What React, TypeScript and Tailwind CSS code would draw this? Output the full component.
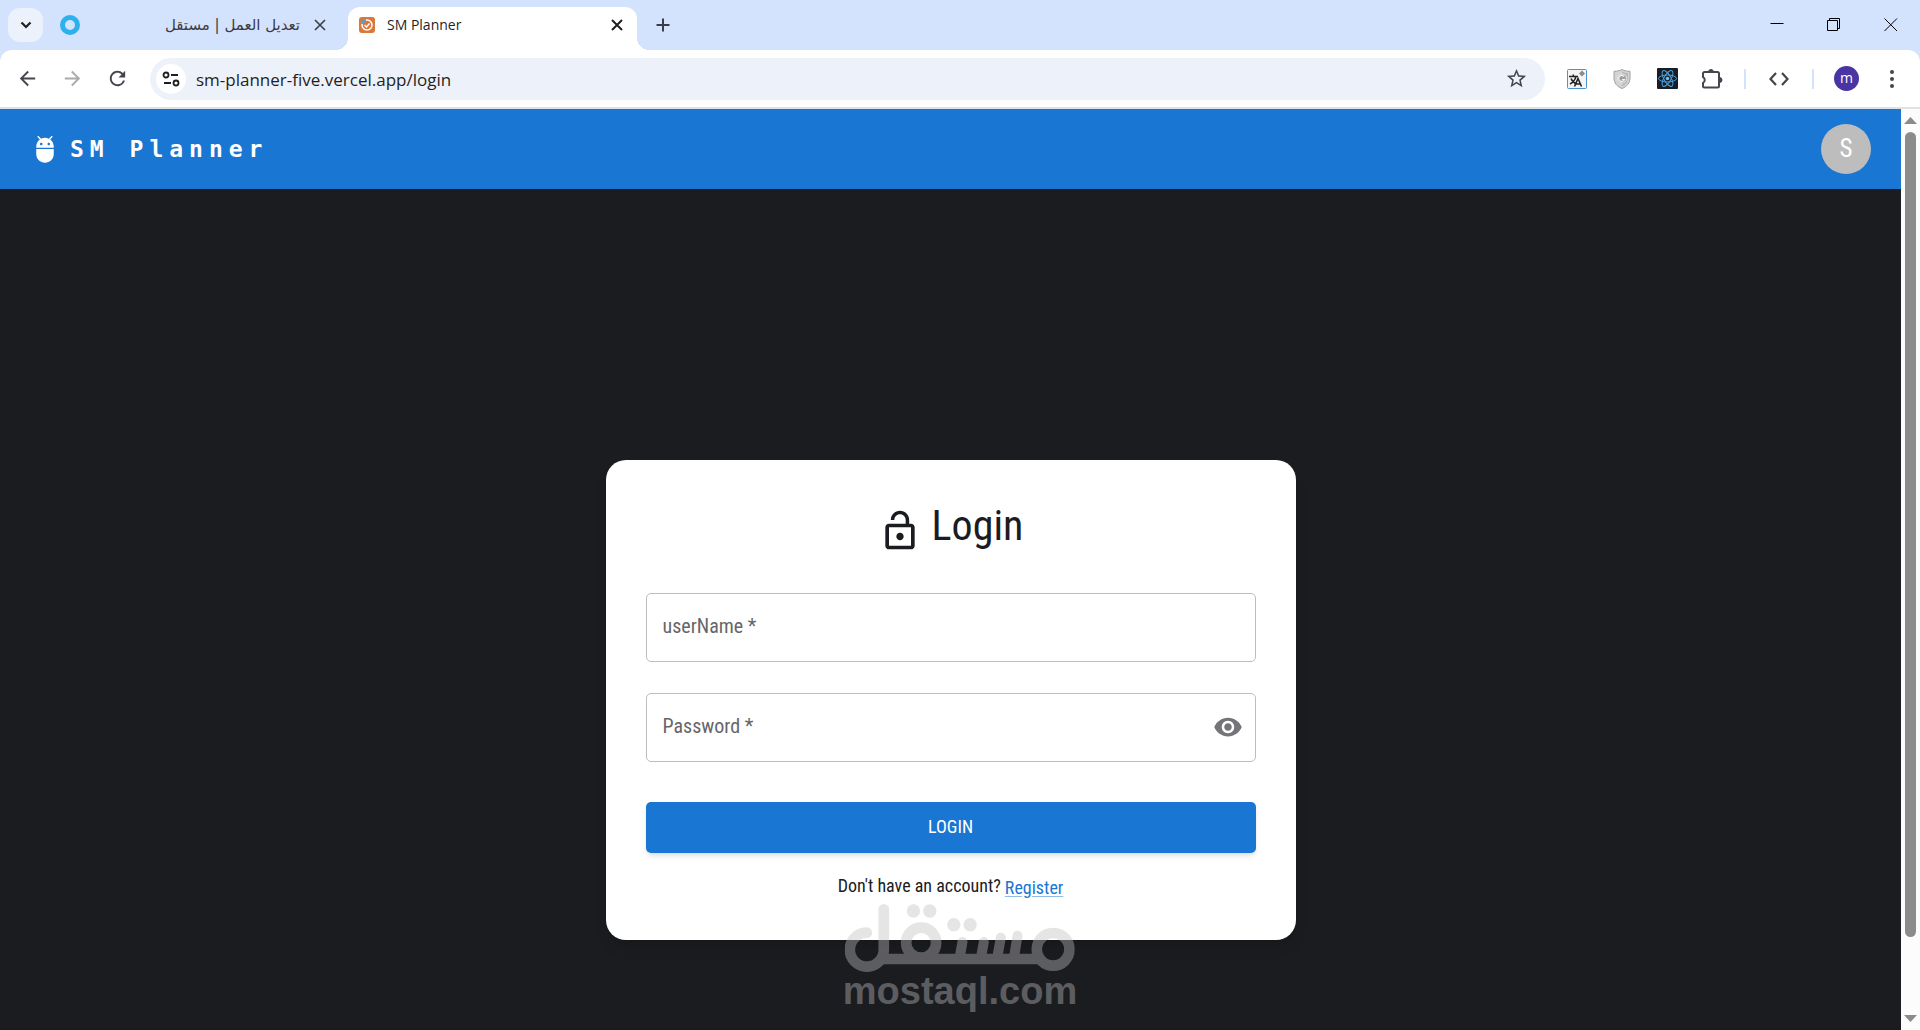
import { useState } from "react";
import type { FormEvent } from "react";
import {
  MdAdb,
  MdArrowBack,
  MdArrowForward,
  MdLockOpen,
  MdRefresh,
  MdStarBorder,
  MdVisibility,
  MdVisibilityOff,
} from "react-icons/md";

const iconButton = "flex h-[30px] w-[30px] shrink-0 items-center justify-center";

const CloseIcon = ({ bold = false }: { bold?: boolean }) => (
  <svg width="12" height="12" viewBox="0 0 12 12" stroke="currentColor" strokeWidth={bold ? 2 : 1.6}>
    <path d="M1 1l10 10M11 1L1 11" />
  </svg>
);

const TranslateIcon = () => (
  <svg width="20" height="20" viewBox="0 0 20 20" fill="none">
    <rect x="0.5" y="0.5" width="19" height="19" rx="1" fill="#f4f4f4" stroke="#4d94cf" />
    <path d="M2 7.5h9M6.3 5.5v2M3 15c3-1.500 5-4 6-7.500M4 9.500c1 2.500 3 4.500 5.500 5.500" stroke="#222" strokeWidth="1.500" />
    <path d="M7.500 17.500l3.500-8 3.500 8M9 15h4.500" stroke="#222" strokeWidth="1.600" />
    <path d="M15 1.500l3 3-3 3-3-3z" fill="#8a8a8a" />
  </svg>
);

const ShieldIcon = () => (
  <svg width="18" height="20" viewBox="0 0 18 20" fill="none">
    <path d="M9 .5c2 1.200 5 1.800 8 1.800V9c0 5-3 8.500-8 10.500C4 17.500 1 14 1 9V2.300c3 0 6-.6 8-1.800z" fill="#d3d3d3" stroke="#a0a0a0" />
    <path d="M9 2.500c2 1 4 1.500 6 1.500v5c0 4-2 6.500-6 8.200z" fill="#b9b9b9" />
    <circle cx="9" cy="9.500" r="4.500" fill="#a0a0a0" stroke="#ededed" />
    <path d="M11 7.500a3 3 0 1 0 .5 3H9" stroke="#f3f3f3" strokeWidth="1.200" />
  </svg>
);

const ReactIcon = () => (
  <svg width="21" height="21" viewBox="0 0 21 21" fill="none" stroke="#4aa3df">
    <rect width="21" height="21" rx="1" fill="#1c1c24" stroke="none" />
    <ellipse cx="10.500" cy="10.500" rx="9" ry="3.500" />
    <ellipse cx="10.500" cy="10.500" rx="9" ry="3.500" transform="rotate(60 10.500 10.500)" />
    <ellipse cx="10.500" cy="10.500" rx="9" ry="3.500" transform="rotate(120 10.500 10.500)" />
    <circle cx="10.500" cy="10.500" r="1.800" fill="#61c3f5" stroke="none" />
  </svg>
);

const PuzzleIcon = () => (
  <svg width="21" height="20" viewBox="0 0 21 20" fill="none">
    <path
      d="M2.500 3h13a1.500 1.500 0 0 1 1.500 1.500v12.500a1.500 1.500 0 0 1-1.500 1.500h-13A1.500 1.500 0 0 1 1 17v-3.200a3.100 3.100 0 0 0 0-5.600V4.500A1.500 1.500 0 0 1 2.500 3z"
      stroke="currentColor"
      strokeWidth="2"
      strokeLinejoin="round"
    />
    <path d="M6.500 3a2.500 2.500 0 0 1 5 0zM17.500 8.500a2.500 2.500 0 0 1 0 5z" fill="currentColor" stroke="currentColor" />
  </svg>
);

function TabStrip() {
  return (
    <div className="flex h-[50px] items-end bg-[#d3e3fd] pl-2 text-[#3c3c46]">
      <button aria-label="Search tabs" className="mb-2 flex h-[34px] w-[35px] items-center justify-center rounded-xl bg-[#ecf2fb] text-[#1f1f1f]">
        <svg width="12" height="8" viewBox="0 0 12 8" fill="none" stroke="currentColor" strokeWidth="2.200">
          <path d="M1.500 1.500L6 6l4.500-4.500" />
        </svg>
      </button>

      {/* Inactive tab */}
      <div className="ml-[17px] flex h-[43px] w-[288px] items-center pb-[7px] pr-[22px]">
        <svg width="20" height="20" viewBox="0 0 20 20" fill="none">
          <circle cx="10" cy="10" r="7.500" stroke="#2cb1ee" strokeWidth="5" />
        </svg>
        <span dir="rtl" className="flex-1 whitespace-nowrap font-['Segoe_UI','DejaVu_Sans',sans-serif] text-[15px] leading-5">
          تعديل العمل | مستقل
        </span>
        <button aria-label="Close tab" className="ml-[14px]">
          <CloseIcon />
        </button>
      </div>

      {/* Active tab */}
      <div className="relative flex h-[43px] w-[289px] items-center rounded-t-xl bg-white pb-[7px] pl-[11px] pr-[14px] text-[#1f1f1f]">
        <span className="absolute -left-3 bottom-0 h-3 w-3 bg-[radial-gradient(circle_at_0_0,transparent_12px,white_12px)]" />
        <span className="absolute -right-3 bottom-0 h-3 w-3 bg-[radial-gradient(circle_at_100%_0,transparent_12px,white_12px)]" />
        <svg width="16" height="16" viewBox="0 0 16 16" fill="none">
          <rect width="16" height="16" rx="3" fill="#d9783a" />
          <circle cx="8" cy="8" r="5" stroke="#fff" strokeWidth="1.500" />
          <path d="M3.200 7A5 5 0 0 1 7 3.200" stroke="#3fa7e6" strokeWidth="2.500" />
          <path d="M5.500 8l2 2 3-3.500" stroke="#fff" strokeWidth="1.500" />
        </svg>
        <span className="ml-3 flex-1 text-sm leading-5">SM Planner</span>
        <button aria-label="Close tab">
          <CloseIcon bold />
        </button>
      </div>

      <button aria-label="New tab" className="mb-[18px] ml-[19px]">
        <svg width="14" height="14" viewBox="0 0 14 14" stroke="currentColor" strokeWidth="2">
          <path d="M7 .5v13M.5 7h13" />
        </svg>
      </button>

      {/* Window controls */}
      <div className="mb-[18px] ml-auto flex gap-[43px] pr-[22px] text-black">
        <button aria-label="Minimize">
          <svg width="14" height="14" viewBox="0 0 14 14" stroke="currentColor">
            <path d="M.5 5.500h13" />
          </svg>
        </button>
        <button aria-label="Restore">
          <svg width="14" height="14" viewBox="0 0 14 14" fill="none" stroke="currentColor">
            <path d="M.5 2.500h10v10H.5zM2.500 2.500v-2h10v10h-2" />
          </svg>
        </button>
        <button aria-label="Close">
          <svg width="14" height="14" viewBox="0 0 14 14" stroke="currentColor">
            <path d="M.5.5l12.500 12.500M13 .5L.5 13" />
          </svg>
        </button>
      </div>
    </div>
  );
}

function Toolbar() {
  return (
    <div className="bg-[#d3e3fd]">
      <div className="flex h-[59px] items-center rounded-t-xl border-b-2 border-[#dfe1e5] bg-white pl-3 pr-[13px] text-[#45454f]">
        <div className="flex gap-[15px]">
          <button aria-label="Back" className={iconButton}><MdArrowBack size={23} /></button>
          <button aria-label="Forward" className={`${iconButton} text-[#ababaf]`}><MdArrowForward size={23} /></button>
          <button aria-label="Reload" className={iconButton}><MdRefresh size={23} /></button>
        </div>

        <div className="ml-[18px] flex h-[42px] flex-1 items-center rounded-full bg-[#edf1fa] px-[6px]">
          <button aria-label="Site information" className={`${iconButton} rounded-full bg-white text-[#1f1f1f]`}>
            <svg width="18" height="16" viewBox="0 0 18 16" fill="none" stroke="currentColor" strokeWidth="1.800">
              <circle cx="4" cy="4" r="2.500" />
              <circle cx="14" cy="12" r="2.500" />
              <path d="M9 4h7M2 12h7" />
            </svg>
          </button>
          <input
            type="text"
            aria-label="Address"
            defaultValue="sm-planner-five.vercel.app/login"
            className="ml-[10px] min-w-0 flex-1 bg-transparent pt-[2px] text-[17px] leading-6 text-[#1f1f1f] outline-none"
          />
          <button aria-label="Bookmark" className={`${iconButton} mr-2`}><MdStarBorder size={23} /></button>
        </div>

        <div className="ml-[17px] flex items-center gap-[15px]">
          <button aria-label="Translate" className={iconButton}><TranslateIcon /></button>
          <button aria-label="Protection" className={iconButton}><ShieldIcon /></button>
          <button aria-label="React tools" className={iconButton}><ReactIcon /></button>
          <button aria-label="Extensions" className={iconButton}><PuzzleIcon /></button>
        </div>
        <div className="ml-[17px] h-5 w-[2px] bg-[#d3e3fd]" />
        <button aria-label="Developer tools" className={`${iconButton} ml-[18px]`}>
          <svg width="20" height="14" viewBox="0 0 20 14" fill="none" stroke="currentColor" strokeWidth="2.200">
            <path d="M7 1L1.500 7 7 13M13 1l5.500 6-5.500 6" />
          </svg>
        </button>
        <div className="ml-[18px] h-5 w-[2px] bg-[#d3e3fd]" />
        <button aria-label="Profile" className="ml-5 flex h-[25px] w-[25px] items-center justify-center rounded-full bg-[#4a34a3] pb-[2px] text-sm text-white">
          m
        </button>
        <button aria-label="Menu" className={`${iconButton} ml-[18px]`}>
          <svg width="4" height="18" viewBox="0 0 4 18" fill="currentColor">
            <circle cx="2" cy="2" r="2" />
            <circle cx="2" cy="9" r="2" />
            <circle cx="2" cy="16" r="2" />
          </svg>
        </button>
      </div>
    </div>
  );
}

function ScrollBar() {
  return (
    <div className="flex w-[19px] shrink-0 flex-col items-center bg-[#fcfcfc] py-2 text-[#8b8b8b]">
      <svg width="13" height="7" viewBox="0 0 13 7" fill="currentColor"><path d="M6.500 0L13 7H0z" /></svg>
      <div className="my-2 w-[11px] flex-1">
        <div className="h-[92%] rounded-full bg-[#8b8b8b]" />
      </div>
      <svg width="13" height="7" viewBox="0 0 13 7" fill="currentColor"><path d="M0 0h13L6.500 7z" /></svg>
    </div>
  );
}

function Watermark() {
  return (
    <div className="pointer-events-none absolute bottom-5 left-1/2 flex -translate-x-1/2 flex-col items-center text-[#bfbfc3] opacity-40">
      <svg width="230" height="68" viewBox="75 70 690 204" fill="none" stroke="currentColor" strokeWidth="32" strokeLinecap="round">
        <path d="M141 156a51 51 0 1 0 51 50V86" />
        <circle cx="304" cy="186" r="45" />
        <circle cx="700" cy="206" r="49" />
        <path d="M175 235h490" strokeLinecap="butt" />
        <path d="M428 184l-8 44M492 184l-8 44M543 171l-10 57M593 165l-10 63" strokeWidth="30" />
        <g fill="currentColor" stroke="none">
          <circle cx="281" cy="91" r="20" />
          <circle cx="330" cy="91" r="20" />
          <circle cx="402" cy="132" r="20" />
          <circle cx="451" cy="132" r="20" />
        </g>
      </svg>
      <span className="font-['Liberation_Sans',sans-serif] text-[38px] font-bold leading-[38px]">mostaql.com</span>
    </div>
  );
}

function LoginForm() {
  const [userName, setUserName] = useState("");
  const [password, setPassword] = useState("");
  const [showPassword, setShowPassword] = useState(false);

  const handleSubmit = (e: FormEvent) => {
    e.preventDefault();
  };

  return (
    <form
      onSubmit={handleSubmit}
      className="mt-[100px] flex w-[690px] flex-col rounded-[20px] bg-white px-10 pb-10 pt-[38px] text-[#1b1c1f] shadow-lg"
    >
      <h1 className="flex items-end justify-center gap-[10px] text-[42px] leading-[55px]">
        <MdLockOpen size={44} />
        Login
      </h1>

      <div className="relative mt-10">
        <input
          id="userName"
          type="text"
          placeholder=" "
          value={userName}
          onChange={(e) => setUserName(e.target.value)}
          className="peer block h-[69px] w-full rounded-[5px] border border-[#bdbdbd] px-[17px] text-xl outline-none focus:border-[#1976d2]"
        />
        <label htmlFor="userName" className="pointer-events-none invisible absolute left-[17px] top-[19px] text-xl leading-7 text-[#666669] peer-placeholder-shown:visible">
          userName *
        </label>
      </div>

      <div className="relative mt-[31px]">
        <input
          id="password"
          type={showPassword ? "text" : "password"}
          placeholder=" "
          value={password}
          onChange={(e) => setPassword(e.target.value)}
          className="peer block h-[69px] w-full rounded-[5px] border border-[#bdbdbd] pl-[17px] pr-14 text-xl outline-none focus:border-[#1976d2]"
        />
        <label htmlFor="password" className="pointer-events-none invisible absolute left-[17px] top-[19px] text-xl leading-7 text-[#666669] peer-placeholder-shown:visible">
          Password *
        </label>
        <button
          type="button"
          aria-label="Toggle password visibility"
          onClick={() => setShowPassword(!showPassword)}
          className="absolute right-[13px] top-[19px] text-[#757579]"
        >
          {showPassword ? <MdVisibilityOff size={30} /> : <MdVisibility size={30} />}
        </button>
      </div>

      <button
        type="submit"
        className="mt-10 h-[51px] rounded-[5px] bg-[#1976d2] text-lg text-white shadow-md"
      >
        LOGIN
      </button>

      <p className="mt-[21px] flex justify-center gap-1 text-lg leading-6">
        Don't have an account?
        <a href="#register" className="pt-[2px] text-[#1976d2] underline decoration-[#8fbce8] underline-offset-2">
          Register
        </a>
      </p>
    </form>
  );
}

export default function App() {
  return (
    <div className="relative flex h-screen flex-col overflow-hidden font-['Segoe_UI','Open_Sans',sans-serif]">
      <TabStrip />
      <Toolbar />

      <div className="flex min-h-0 flex-1 font-['Roboto_Condensed','Liberation_Sans_Narrow',Roboto,sans-serif]">
        <div className="min-w-0 flex-1 overflow-hidden bg-[#1b1c1f]">
          <header className="flex h-20 items-center justify-between bg-[#1976d2] px-[30px] text-white">
            <a href="#home" className="flex items-center gap-[10px] font-['DejaVu_Sans_Mono',monospace] text-[23px] font-bold tracking-[6px]">
              <MdAdb size={30} />
              SM Planner
            </a>
            <button aria-label="Account" className="flex h-[50px] w-[50px] items-center justify-center rounded-full bg-[#bdbdbd] text-[25px]">
              S
            </button>
          </header>

          <main className="flex h-full items-center justify-center">
            <LoginForm />
          </main>
        </div>
        <ScrollBar />
      </div>

      <Watermark />
    </div>
  );
}
